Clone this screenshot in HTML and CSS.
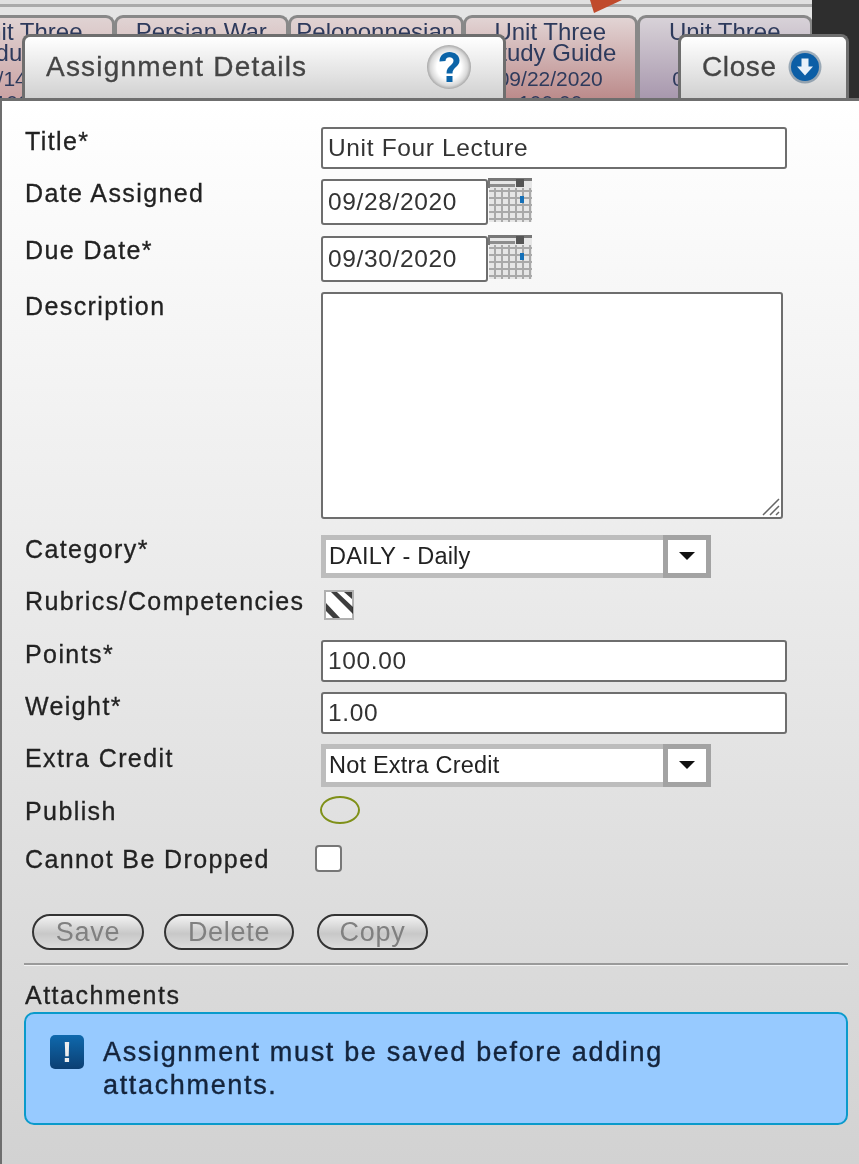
FILE: index.html
```html
<!DOCTYPE html>
<html lang="en">
<head>
<meta charset="utf-8">
<title>Assignment Details</title>
<link rel="stylesheet" href="styles.css">
</head>
<body>
<div class="page">
  <div class="backdrop">
    <div class="rule"></div>
    <div class="marker"></div>
    <div class="tabs">
      <div class="tab pink">Unit Three<br>Module Test<span class="d">09/14/2020</span><span class="d">100.00</span></div>
      <div class="tab pink">Persian War</div>
      <div class="tab pink">Peloponnesian</div>
      <div class="tab rose">Unit Three<br>Study Guide<span class="d">09/22/2020</span><span class="d">100.00</span></div>
      <div class="tab mauve">Unit Three<br>&nbsp;<span class="d">09/22/2020</span></div>
    </div>
  </div>
  <div class="dialog">
    <div class="heads">
      <div class="head head-main">
        <span>Assignment Details</span>
        <svg class="help" viewBox="0 0 46 46" width="46" height="46">
          <defs><radialGradient id="hg" cx=".5" cy=".5" r=".5"><stop offset=".55" stop-color="#fff"/><stop offset=".85" stop-color="#d8d8d8"/><stop offset="1" stop-color="#a8a8a8"/></radialGradient></defs>
          <circle cx="23" cy="23" r="22" fill="url(#hg)"/>
          <path d="M13.500 17.500c0-6 4.500-9.500 10-9.500s10 3.500 10 8.500c0 6.500-7 6.500-7 13h-6c0-8 7-8 7-13 0-2-1.700-3.300-4-3.300-2.500 0-4 1.600-4 3.800z" fill="#0b64a8"/>
          <rect x="20.500" y="32" width="6" height="6" fill="#0b64a8"/>
        </svg>
      </div>
      <div class="head head-close">
        <span>Close</span>
        <svg viewBox="0 0 34 34" width="34" height="34">
          <circle cx="17" cy="17" r="16.500" fill="#3a5a78" opacity=".45"/>
          <circle cx="17" cy="17" r="14" fill="#0b5ea6"/>
          <path d="M13.500 8.500h7v8h4.500l-8 9-8-9h4.500z" fill="#e8f1fa"/>
        </svg>
      </div>
    </div>
    <div class="panel">
      <div class="row r-title"><label>Title*</label><input class="text wide" value="Unit Four Lecture"></div>
      <div class="row r-date"><label>Date Assigned</label>
        <input class="text date" value="09/28/2020">
        <svg class="cal" viewBox="0 0 44 44" width="44" height="44"><use href="#calicon"/></svg>
      </div>
      <div class="row r-date"><label>Due Date*</label>
        <input class="text date" value="09/30/2020">
        <svg class="cal" viewBox="0 0 44 44" width="44" height="44"><use href="#calicon"/></svg>
      </div>
      <div class="row r-desc"><label>Description</label>
        <div class="area-wrap">
          <textarea class="area"></textarea>
          <svg class="grip" viewBox="0 0 20 20" width="20" height="20"><path d="M2 18L18 2M9 18L18 9M15 18l3-3" stroke="#666" stroke-width="1.500" fill="none"/></svg>
        </div>
      </div>
      <div class="row r-select"><label>Category*</label>
        <div class="select"><span class="val">DAILY - Daily</span><span class="arrow"></span></div>
      </div>
      <div class="row r-rubric"><label>Rubrics/Competencies</label>
        <svg class="rubric" viewBox="0 0 30 30" width="30" height="30">
          <rect x="1" y="1" width="28" height="28" fill="#fff" stroke="#b0b0b0" stroke-width="2"/>
          <path d="M7 2h6l16 15v7zM2 13l14 15H9l-7-7zM20 2h8v7z" fill="#1c1c1c" opacity=".85"/>
        </svg>
      </div>
      <div class="row r-num"><label>Points*</label><input class="text wide" value="100.00"></div>
      <div class="row r-num"><label>Weight*</label><input class="text wide" value="1.00"></div>
      <div class="row r-select2"><label>Extra Credit</label>
        <div class="select"><span class="val">Not Extra Credit</span><span class="arrow"></span></div>
      </div>
      <div class="row r-pub"><label>Publish</label><span class="toggle"></span></div>
      <div class="row r-drop"><label>Cannot Be Dropped</label><span class="check"></span></div>
      <div class="actions">
        <button class="btn btn-save" disabled>Save</button>
        <button class="btn btn-delete" disabled>Delete</button>
        <button class="btn btn-copy" disabled>Copy</button>
      </div>
      <div class="divider"></div>
      <div class="att">Attachments</div>
      <div class="alert">
        <span class="alert-ic">!</span>
        <p>Assignment must be saved before adding attachments.</p>
      </div>
    </div>
  </div>
  <svg class="defs" width="0" height="0">
    <defs>
      <g id="calicon">
        <rect x="1" y="1" width="43" height="43" fill="#e6e6e6"/>
        <path d="M1 13h43M1 20h43M1 27h43M1 34h43M1 41h43M7 10v34M14 10v34M21 10v34M28 10v34M35 10v34M42 10v34" stroke="#a9a9a9" stroke-width="2" fill="none"/>
        <rect x="0" y="0" width="44" height="3" fill="#777"/>
        <rect x="0" y="6" width="27" height="3" fill="#8d8d8d"/>
        <rect x="28" y="1" width="8" height="8" fill="#555"/>
        <rect x="0" y="0" width="2" height="10" fill="#777"/>
        <rect x="32" y="18" width="4" height="7" fill="#1470b8"/>
      </g>
    </defs>
  </svg>
</div>
</body>
</html>
```

FILE: styles.css
```css
* { box-sizing: border-box; }
html, body { margin: 0; padding: 0; }
body { font-family: "Liberation Sans", Arial, sans-serif; background: #2e2e2e; }
.page {
  position: relative;
  width: 859px;
  height: 1164px;
  overflow: hidden;
  background: #2e2e2e;
  filter: blur(0.55px);
}
.backdrop {
  position: relative;
  width: 812px;
  height: 100px;
  background: #e4e4e4;
  padding-top: 15px;
  overflow: hidden;
}
.rule { position: absolute; top: 0; left: 0; right: 0; height: 7px; background: #e0e0e0; border-bottom: 3px solid #aaa; }
.marker {
  position: absolute;
  top: 0;
  left: 590px;
  width: 0;
  height: 0;
  border-top: 13px solid #c04a2c;
  border-left: 4px solid transparent;
  border-right: 28px solid transparent;
}
.tabs { display: flex; margin-left: -61px; width: 880px; }
.tab {
  flex: 0 0 175.500px;
  height: 90px;
  border: 3px solid #888;
  border-bottom: 0;
  border-radius: 9px 9px 0 0;
  margin-right: -1px;
  text-align: center;
  color: #2d3a5c;
  font-size: 24px;
  line-height: 21px;
  padding-top: 3px;
}
.tab .d { display: block; font-size: 21px; line-height: 26px; margin-top: 3px; }
.tab .d + .d { margin-top: -2px; }
.pink { background: linear-gradient(#e0d3d3, #c99f9f); }
.rose { background: linear-gradient(#e2d4d4, #b98585); }
.mauve { background: linear-gradient(#d8d2d8, #a493aa); }
.dialog {
  position: absolute;
  top: 34px;
  left: 0;
  width: 859px;
  height: 1130px;
}
.heads {
  display: flex;
  justify-content: space-between;
  padding: 0 10px 0 22px;
  height: 64px;
}
.head {
  display: flex;
  align-items: center;
  height: 66px;
  padding-bottom: 4px;
  border: 3px solid #6e6e6e;
  border-bottom: 0;
  border-radius: 8px 8px 0 0;
  background: linear-gradient(#ffffff, #cfcfcf);
  color: #444;
  font-size: 28px;
  letter-spacing: 1.200px;
  -webkit-text-stroke: .3px #444;
}
.head-main { width: 484px; padding-left: 21px; justify-content: space-between; padding-right: 31px; }
.head-close { width: 171px; padding-left: 21px; gap: 11px; letter-spacing: .6px; }
.panel {
  position: relative;
  height: 1066px;
  border-top: 3px solid #6e6e6e;
  border-left: 2px solid #6e6e6e;
  background: linear-gradient(#ffffff, #d2d2d2);
  padding: 26px 11px 0 22px;
}
.row { display: flex; align-items: flex-start; }
.row label {
  flex: 0 0 297px;
  padding-left: 1px;
  font-size: 25px;
  line-height: 28px;
  color: #222;
  letter-spacing: 1.400px;
  white-space: nowrap;
  -webkit-text-stroke: .3px #222;
}
.text {
  display: block;
  height: 42px;
  border: 2px solid #6e6e6e;
  border-radius: 3px;
  background: #fff;
  font: 24.500px "Liberation Sans", Arial, sans-serif;
  letter-spacing: .65px;
  color: #333;
  padding: 0 5px;
  outline: 0;
}
.wide { width: 466px; }
.date { width: 167px; height: 46px; }
.cal { margin: -1px 0 0 0; flex: none; }
.r-title { height: 52px; }
.r-date { height: 56.500px; }
.r-desc { height: 243px; }
.r-select { height: 55px; }
.r-rubric { height: 50px; }
.r-rubric label { margin-top: -3px; }
.r-rubric .rubric { margin: 0 0 0 3px; }
.r-num { height: 52px; }
.r-select2 { height: 53px; }
.r-pub { height: 48px; }
.r-drop { height: 69px; }
.area-wrap { position: relative; width: 462px; height: 227px; }
.area {
  display: block;
  width: 100%;
  height: 100%;
  border: 2px solid #6e6e6e;
  border-radius: 3px;
  background: #fff;
  outline: 0;
  resize: none;
}
.grip { position: absolute; right: 2px; bottom: 2px; }
.select {
  display: flex;
  justify-content: space-between;
  width: 390px;
  height: 43px;
  border: 5px solid #bdbdbd;
  background: #fff;
  font-size: 23.500px;
  letter-spacing: .2px;
  color: #222;
}
.val { padding-left: 3px; line-height: 33px; }
.arrow {
  position: relative;
  width: 48px;
  margin: -5px -5px -5px 0;
  border: 5px solid #a3a3a3;
  background: #fff;
}
.arrow::after {
  content: "";
  position: absolute;
  left: 11px;
  top: 12px;
  border-top: 8px solid #111;
  border-left: 8px solid transparent;
  border-right: 8px solid transparent;
}
.toggle {
  display: block;
  width: 40px;
  height: 28px;
  margin: -1px 0 0 -1px;
  border: 2px solid #7f9018;
  border-radius: 50%;
}
.check {
  display: block;
  width: 27px;
  height: 27px;
  margin: 0 0 0 -6px;
  border: 2px solid #777;
  border-radius: 4px;
  background: #fff;
}
.actions { display: flex; padding-left: 8px; height: 49px; }
.btn {
  height: 36px;
  padding: 0;
  border: 2px solid #333;
  border-radius: 18px;
  background: linear-gradient(#f2f2f2, #c8c8c8 55%, #dcdcdc);
  color: #808080;
  font: 27px "Liberation Sans", Arial, sans-serif;
  letter-spacing: .7px;
}
.btn-save { width: 112px; margin-right: 20px; }
.btn-delete { width: 130px; margin-right: 23px; }
.btn-copy { width: 111px; }
.divider { height: 3px; background: #9a9a9a; border-bottom: 1px solid #f2f2f2; width: 824px; }
.att { padding-left: 1px; font-size: 25px; line-height: 28px; color: #222; letter-spacing: 1.500px; margin-top: 15px; -webkit-text-stroke: .3px #222; }
.alert {
  display: flex;
  align-items: flex-start;
  gap: 19px;
  width: 824px;
  height: 113px;
  margin-top: 3px;
  padding: 23px 60px 0 24px;
  border: 2px solid #0a9acb;
  border-radius: 10px;
  background: #97caff;
}
.alert-ic {
  flex: none;
  width: 34px;
  height: 34px;
  margin-top: -2px;
  border-radius: 5px;
  background: linear-gradient(#0f69ad, #0b3f73);
  color: #eee;
  text-align: center;
  font-weight: bold;
  font-size: 30px;
  line-height: 34px;
}
.alert p {
  margin: -1px 0 0;
  font-size: 27px;
  line-height: 33px;
  letter-spacing: 1.660px;
  color: #14243c;
  -webkit-text-stroke: .4px #14243c;
}
.defs { position: absolute; }
```
